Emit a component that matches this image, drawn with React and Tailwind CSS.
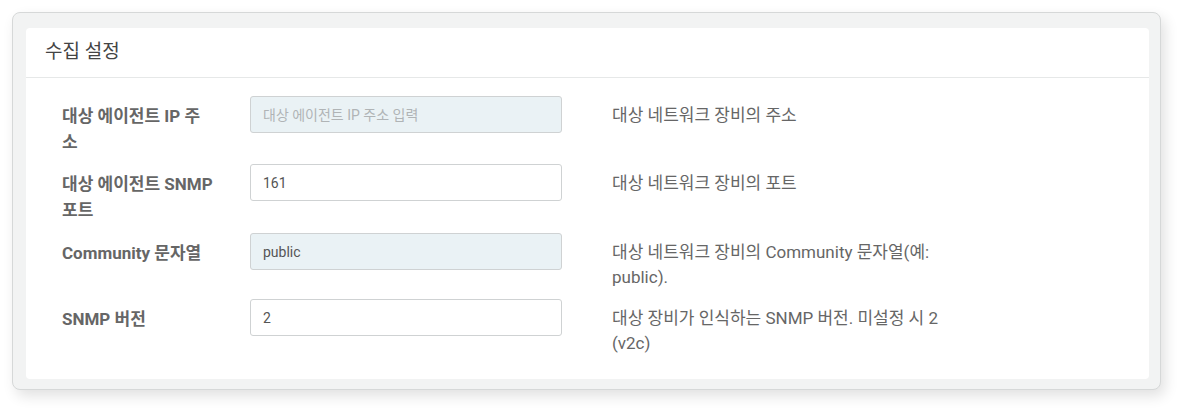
import React from 'react';

const fields = [
    {
        label: '대상 에이전트 IP 주소',
        placeholder: '대상 에이전트 IP 주소 입력',
        value: '',
        readOnly: true,
        help: '대상 네트워크 장비의 주소',
    },
    {
        label: '대상 에이전트 SNMP 포트',
        value: '161',
        help: '대상 네트워크 장비의 포트',
    },
    {
        label: 'Community 문자열',
        value: 'public',
        readOnly: true,
        help: '대상 네트워크 장비의 Community 문자열(예: public).',
    },
    {
        label: 'SNMP 버전',
        value: '2',
        help: '대상 장비가 인식하는 SNMP 버전. 미설정 시 2 (v2c)',
    },
];

export default function App() {
    return (
        <div
            className="w-[1184px] h-[413px] bg-white pt-[12px] pl-[12px]"
            style={{ fontFamily: 'Roboto, "Noto Sans CJK KR", sans-serif' }}
        >
            {/* 바깥 박스 */}
            <div className="w-[1149px] bg-[#f2f3f3] border border-[#d6d8d8] rounded-[8px] pt-[15px] pl-[13px] pr-[11px] pb-[10px] shadow-[4px_6px_14px_rgba(0,0,0,0.12)]">
                <div className="bg-white rounded-[4px]">
                    <div className="h-[50px] border-b border-[#e6e8e8] flex items-center pl-[19px]">
                        <h2 className="text-[19px] text-[#444] font-normal">수집 설정</h2>
                    </div>

                    <div className="pt-[18px] pb-[23px] pl-[36px] flex flex-col gap-[9px]">
                        {fields.map((f, i) => (
                            <div key={f.label} className={`flex items-start ${i === 2 ? 'mt-[1px]' : ''}`}>
                                <div className="w-[151px] mr-[37px] pt-[7px] text-[17px] leading-[26px] font-bold text-[#666]">
                                    {f.label}
                                </div>
                                <input
                                    type="text"
                                    readOnly
                                    defaultValue={f.value}
                                    placeholder={f.placeholder}
                                    className={`w-[312px] h-[37px] px-[12px] text-[14px] text-[#555] placeholder:text-[#b0b4b6] border border-[#cfd2d3] rounded-[3px] outline-none ${f.readOnly ? 'bg-[#eaf2f5]' : 'bg-white'}`}
                                />
                                <div className="ml-[50px] w-[332px] pt-[7px] text-[17px] leading-[25px] text-[#666]">
                                    {f.help}
                                </div>
                            </div>
                        ))}
                    </div>
                </div>
            </div>
        </div>
    );
}
